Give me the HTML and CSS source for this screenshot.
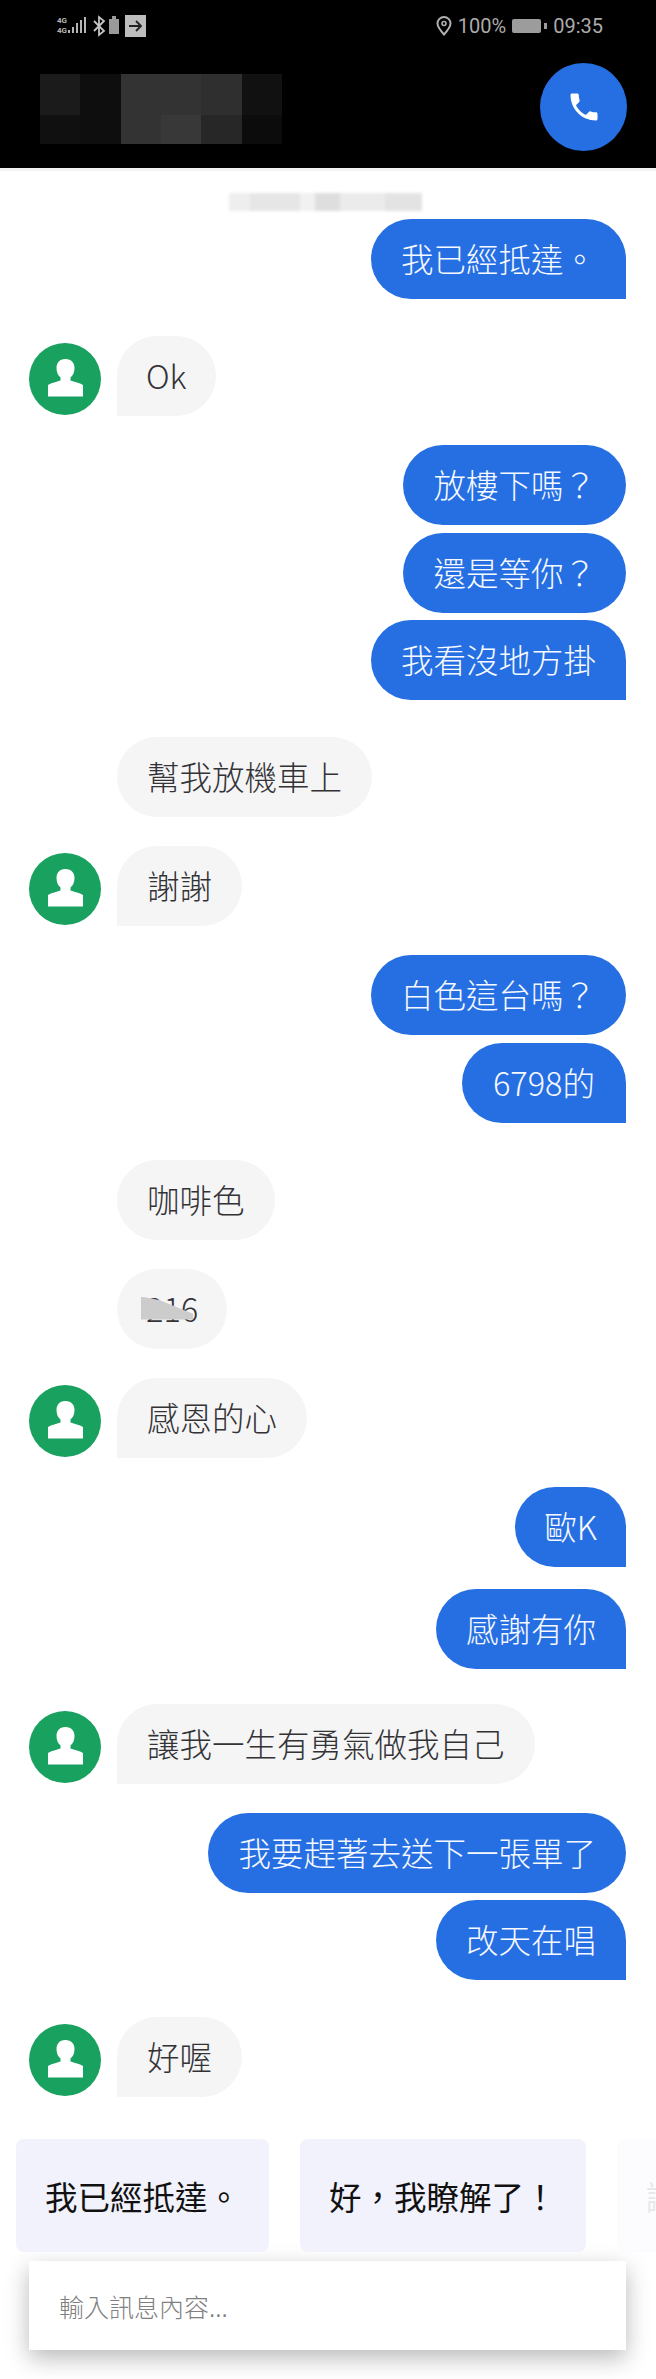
FILE: index.html
```html
<!DOCTYPE html>
<html lang="zh-Hant">

<head>
    <meta charset="UTF-8">
    <meta name="viewport" content="width=device-width, initial-scale=1.0">
    <title>訊息</title>
    <link rel="stylesheet" href="styles.css">
</head>

<body>
    <header class="top">
        <div class="status">
            <svg class="status-left" width="91" height="24" viewBox="0 0 91 24">
                <text x="1" y="9" class="net">4G</text>
                <text x="1" y="19" class="net">4G</text>
                <g fill="#b5b5b5">
                    <rect x="12" y="16" width="2" height="3"/>
                    <rect x="16" y="13" width="2" height="6"/>
                    <rect x="20" y="9" width="2" height="10"/>
                    <rect x="24" y="6" width="2" height="13"/>
                    <rect x="28" y="3" width="2" height="16"/>
                </g>
                <path d="M38 7l10 10-5 4V3l5 4-10 10" fill="none" stroke="#c4c4c4" stroke-width="1.800"/>
                <rect x="53" y="5" width="10" height="15" fill="#9a9a9a"/>
                <rect x="56" y="2" width="4" height="3" fill="#9a9a9a"/>
                <rect x="69" y="1" width="21" height="22" fill="#bdbdbd"/>
                <path d="M73 12h12M80 7l5 5-5 5" fill="none" stroke="#222" stroke-width="1.800"/>
            </svg>
            <div class="status-right">
                <svg width="16" height="20" viewBox="0 0 16 20">
                    <path d="M8 18.500C4 14 1.500 10.500 1.500 7.500a6.500 6.500 0 0 1 13 0c0 3-2.500 6.500-6.500 11z" fill="none" stroke="#b0b0b0" stroke-width="2"/>
                    <circle cx="8" cy="7.500" r="2" fill="none" stroke="#b0b0b0" stroke-width="1.600"/>
                </svg>
                <span>100%</span>
                <svg width="35" height="14" viewBox="0 0 35 14">
                    <rect x="0" y="0" width="29" height="14" rx="2" fill="#9c9c9c"/>
                    <rect x="32" y="4" width="3" height="6" fill="#9c9c9c"/>
                </svg>
                <span>09:35</span>
            </div>
        </div>
        <div class="title-row">
            <div class="mosaic">
                <i class="m1"></i><i class="m2"></i><i class="m3"></i><i class="m3"></i><i class="m4"></i><i class="m5"></i>
                <i class="m6"></i><i class="m2"></i><i class="m3"></i><i class="m7"></i><i class="m8"></i><i class="m9"></i>
            </div>
            <button class="call">
                <svg width="36" height="36" viewBox="0 0 24 24">
                    <path fill="#fff" d="M6.620 10.790c1.440 2.830 3.760 5.140 6.590 6.590l2.200-2.200c.270-.270.670-.360 1.020-.240 1.120.370 2.330.570 3.570.570.550 0 1 .450 1 1V20c0 .550-.450 1-1 1-9.390 0-17-7.610-17-17 0-.550.450-1 1-1h3.500c.550 0 1 .450 1 1 0 1.250.200 2.450.570 3.570.110.350.030.740-.250 1.020l-2.200 2.200z"/>
                </svg>
            </button>
        </div>
    </header>

    <main class="chat">
        <div class="day-strip"></div>

        <div class="msg out gap-8"><div class="bubble sent last">我已經抵達。</div></div>

        <div class="msg in gap-37">
            <svg class="avatar" viewBox="0 0 72 72"><use href="#person"/></svg>
            <div class="bubble got last short">Ok</div>
        </div>

        <div class="msg out gap-29"><div class="bubble sent">放樓下嗎？</div></div>
        <div class="msg out gap-7"><div class="bubble sent">還是等你？</div></div>
        <div class="msg out gap-7"><div class="bubble sent last">我看沒地方掛</div></div>

        <div class="msg in plain gap-37"><div class="bubble got">幫我放機車上</div></div>
        <div class="msg in gap-29">
            <svg class="avatar" viewBox="0 0 72 72"><use href="#person"/></svg>
            <div class="bubble got last">謝謝</div>
        </div>

        <div class="msg out gap-29"><div class="bubble sent">白色這台嗎？</div></div>
        <div class="msg out gap-7"><div class="bubble sent last long">6798的</div></div>

        <div class="msg in plain gap-37"><div class="bubble got">咖啡色</div></div>
        <div class="msg in plain gap-29"><div class="bubble got masked">216</div></div>
        <div class="msg in gap-29">
            <svg class="avatar" viewBox="0 0 72 72"><use href="#person"/></svg>
            <div class="bubble got last">感恩的心</div>
        </div>

        <div class="msg out gap-29"><div class="bubble sent last short">歐K</div></div>
        <div class="msg out gap-22"><div class="bubble sent last">感謝有你</div></div>

        <div class="msg in gap-35">
            <svg class="avatar" viewBox="0 0 72 72"><use href="#person"/></svg>
            <div class="bubble got last">讓我一生有勇氣做我自己</div>
        </div>

        <div class="msg out gap-29"><div class="bubble sent">我要趕著去送下一張單了</div></div>
        <div class="msg out gap-7"><div class="bubble sent last">改天在唱</div></div>

        <div class="msg in gap-37">
            <svg class="avatar" viewBox="0 0 72 72"><use href="#person"/></svg>
            <div class="bubble got last">好喔</div>
        </div>
    </main>

    <div class="replies">
        <div class="chip">我已經抵達。</div>
        <div class="chip">好，我瞭解了！</div>
        <div class="chip faded">謝謝！</div>
    </div>

    <div class="composer">
        <input type="text" placeholder="輸入訊息內容...">
    </div>

    <!-- shared avatar figure -->
    <svg width="0" height="0" class="defs">
        <symbol id="person" viewBox="0 0 72 72">
            <circle cx="36" cy="36" r="36" fill="#18a15f"/>
            <path fill="#fff" d="M36 16c-5.500 0-8.500 4-8.500 9 0 4.500 1.500 7.500 4 9.500v3c-4 1.500-9 2-12.500 4.500v11.500h35v-11.500c-3.500-2.500-8.500-3-12.500-4.500v-3c2.500-2 4-5 4-9.500 0-5-3-9-9-9z"/>
        </symbol>
    </svg>
</body>

</html>
```

FILE: styles.css
```css
* {
    margin: 0;
    padding: 0;
    box-sizing: border-box;
}

body {
    width: 656px;
    height: 2379px;
    overflow: hidden;
    background: #fff;
    font-family: "Noto Sans CJK TC", "Noto Sans", sans-serif;
    font-size: 32.5px;
    font-weight: 300;
}

.defs {
    position: absolute;
}

/* header */

.top {
    height: 171px;
    background: #000;
    border-bottom: 3px solid #f3f3f3;
}

.status {
    height: 53px;
    padding: 14px 53px 0 56px;
    display: flex;
    justify-content: space-between;
    align-items: flex-start;
}

.status-right {
    display: flex;
    align-items: center;
    gap: 6px;
    height: 24px;
    color: #ababab;
    font-family: Roboto, sans-serif;
    font-size: 20px;
    font-weight: 400;
}

.net {
    font-family: Roboto, sans-serif;
    font-size: 8px;
    font-weight: 700;
    fill: #b5b5b5;
}

.title-row {
    height: 114px;
    padding: 10px 29px 0 40px;
    display: flex;
    justify-content: space-between;
    align-items: flex-start;
}

.mosaic {
    margin-top: 11px;
    width: 242px;
    height: 70px;
    display: grid;
    grid-template-columns: repeat(6, 1fr);
    grid-template-rows: 41px 29px;
}

.m1 { background: #1b1b1b; }
.m2 { background: #0e0e0e; }
.m3 { background: #333; }
.m4 { background: #2f2f2f; }
.m5 { background: #111; }
.m6 { background: #101010; }
.m7 { background: #383838; }
.m8 { background: #272727; }
.m9 { background: #0c0c0c; }

.call {
    width: 87px;
    height: 88px;
    border: none;
    border-radius: 50%;
    background: #266fe3;
    display: flex;
    align-items: center;
    justify-content: center;
}

/* conversation */

.day-strip {
    margin: 22px 0 0 229px;
    width: 193px;
    height: 18px;
    filter: blur(1.500px);
    background: linear-gradient(to right,
        #eee 0 21px, #e6e6e6 21px 71px, #f1f1f1 71px 86px,
        #dedede 86px 111px, #ebebeb 111px 156px, #e3e3e3 156px);
}

.msg {
    display: flex;
    align-items: flex-end;
}

.msg.out {
    justify-content: flex-end;
    padding-right: 30px;
}

.msg.in {
    padding-left: 29px;
}

.msg.in.plain {
    padding-left: 117px;
}

.gap-7 { margin-top: 7.500px; }
.gap-8 { margin-top: 8px; }
.gap-22 { margin-top: 22px; }
.gap-29 { margin-top: 29px; }
.gap-35 { margin-top: 35px; }
.gap-37 { margin-top: 37px; }

.avatar {
    width: 72px;
    height: 72px;
    margin-right: 16px;
    margin-bottom: 1px;
    flex-shrink: 0;
}

.bubble {
    height: 80px;
    line-height: 77px;
    padding: 0 30px;
    border-radius: 40px;
    white-space: nowrap;
}

.bubble.short {
    padding: 0 29px;
}

.bubble.long {
    padding: 0 31px;
}

.sent {
    background: #266fe3;
    color: #f6f9ff;
}

.sent.last {
    border-bottom-right-radius: 0;
}

.got {
    background: #f5f5f6;
    color: #333336;
}

.got.last {
    border-bottom-left-radius: 0;
}

/* number partly hidden by a grey patch */
.masked {
    position: relative;
    padding: 0 29px;
}

.masked::after {
    content: "";
    position: absolute;
    left: 24px;
    top: 28px;
    width: 52px;
    height: 23px;
    background: #ccc;
    clip-path: polygon(0 0, 35% 15%, 100% 75%, 100% 100%, 0 100%);
}

/* suggested replies */

.replies {
    margin-top: 42px;
    padding-left: 16px;
    display: flex;
    gap: 31px;
    overflow: hidden;
}

.chip {
    flex-shrink: 0;
    height: 113px;
    line-height: 113px;
    padding: 0 29px;
    border-radius: 8px;
    background: #f1f2fb;
    color: #111;
    font-weight: 400;
    white-space: nowrap;
}

.chip.faded {
    background: #fcfcfe;
    color: #e8e8e8;
}

.composer {
    margin: 9px 0 0 29px;
    width: 597px;
    height: 89px;
    padding-left: 30px;
    display: flex;
    align-items: center;
    background: #fff;
    box-shadow: 0 8px 22px rgba(0, 0, 0, 0.28);
}

.composer input {
    width: 100%;
    border: none;
    outline: none;
    background: transparent;
    font-family: inherit;
    font-size: 25px;
    font-weight: 300;
}

.composer input::placeholder {
    color: #808080;
}
```
